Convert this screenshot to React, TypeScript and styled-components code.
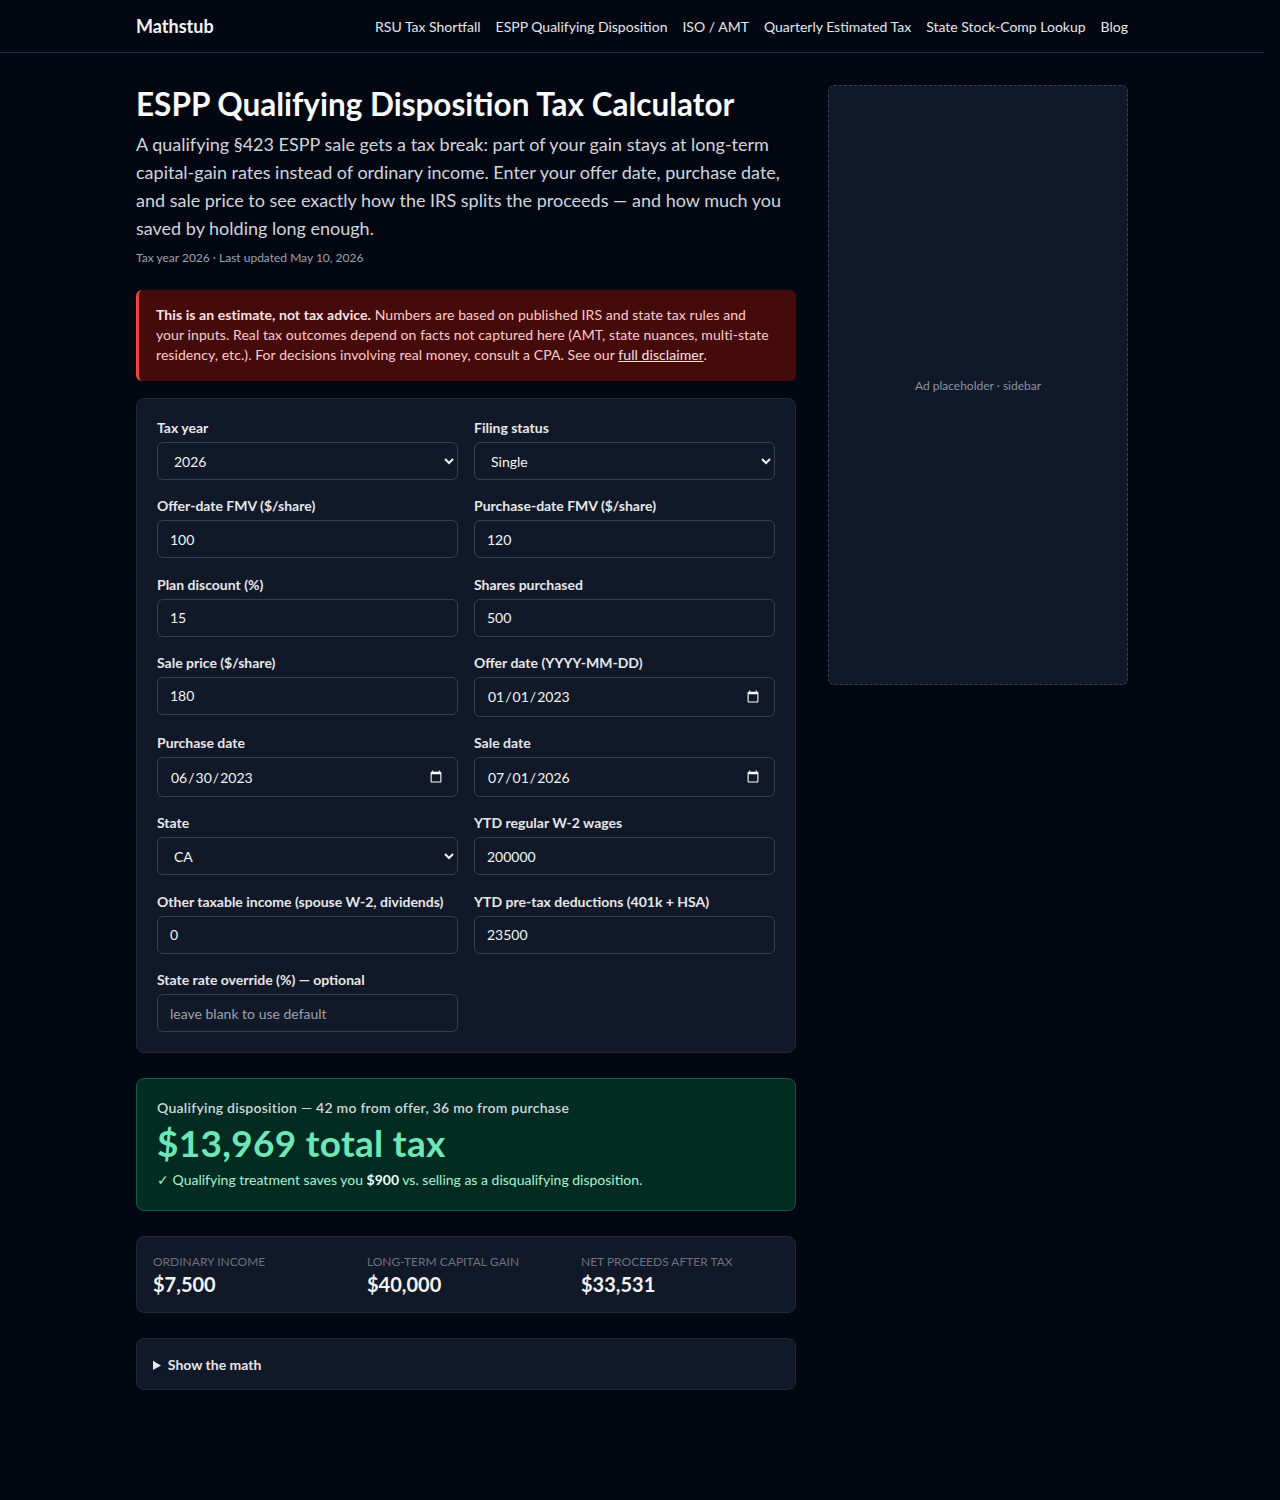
import React from "react";
import styled, { createGlobalStyle } from "styled-components";

const GlobalStyle = createGlobalStyle`
  * { box-sizing: border-box; }
  html, body {
    margin: 0;
    background: #030712;
    color: #e5e7eb;
    font-family: Lato, "Noto Sans", sans-serif;
    color-scheme: dark;
  }
  /* leave room for the classic scrollbar gutter */
  #root { width: calc(100vw - 16px); }
`;

const Header = styled.header`
  border-bottom: 1px solid #1f2937;
`;

const HeaderInner = styled.div`
  max-width: 992px;
  margin: 0 auto;
  height: 52px;
  display: flex;
  align-items: center;
  justify-content: space-between;
`;

const Brand = styled.a`
  font-size: 18px;
  font-weight: 700;
  color: #f3f4f6;
  text-decoration: none;
`;

const Nav = styled.nav`
  display: flex;
  gap: 15px;
  a {
    font-size: 14px;
    color: #e5e7eb;
    text-decoration: none;
  }
`;

const Page = styled.div`
  max-width: 992px;
  margin: 0 auto;
  padding: 32px 0 100px;
  display: grid;
  grid-template-columns: 660px 300px;
  gap: 32px;
  align-items: start;
`;

const Main = styled.main`
  display: flex;
  flex-direction: column;
`;

const Title = styled.h1`
  font-size: 31.5px;
  font-weight: 700;
  color: #f9fafb;
  margin: 0 0 7px;
  line-height: 38px;
`;

const Lede = styled.p`
  font-size: 18px;
  line-height: 28px;
  color: #d1d5db;
  margin: 0 0 8px;
`;

const Meta = styled.div`
  font-size: 12px;
  color: #9ca3af;
  margin-bottom: 25px;
`;

const Disclaimer = styled.div`
  background: #450a0a;
  border-left: 3px solid #ef4444;
  border-radius: 6px;
  padding: 15px 22px 16px 17px;
  font-size: 14px;
  line-height: 20px;
  letter-spacing: 0.08px;
  color: #fecaca;
  margin-bottom: 17px;
  strong { color: #fee2e2; }
  a { color: #fee2e2; text-decoration: underline; }
`;

const Card = styled.section`
  background: #111827;
  border: 1px solid #1f2937;
  border-radius: 8px;
`;

const FormCard = styled(Card)`
  padding: 20px;
  display: grid;
  grid-template-columns: 1fr 1fr;
  column-gap: 16px;
  row-gap: 17.3px;
  margin-bottom: 25px;
`;

const Field = styled.label`
  display: flex;
  flex-direction: column;
  gap: 6px;
  font-size: 14px;
  font-weight: 700;
  color: #e5e7eb;
`;

const controlCss = `
  width: 100%;
  height: 38px;
  background: #111827;
  border: 1px solid #374151;
  border-radius: 6px;
  color: #f3f4f6;
  font-family: Lato, "Noto Sans", sans-serif;
  font-size: 14px;
  padding: 0 12px;
  color-scheme: dark;
  outline: none;
`;

const Input = styled.input<{ $tall?: boolean }>`
  ${controlCss}
  height: ${(p) => (p.$tall ? "40px" : "38px")};
  &::placeholder { color: #9ca3af; }
`;

const Select = styled.select`
  ${controlCss}
  padding: 0 8px 0 12px;
`;

const ResultCard = styled.section`
  background: #022c22;
  border: 1px solid #065f46;
  border-radius: 8px;
  padding: 20px 20px 22px;
  margin-bottom: 25px;
`;

const ResultLead = styled.div`
  font-size: 14px;
  font-weight: 600;
  letter-spacing: 0.25px;
  color: #d1d5db;
`;

const ResultBig = styled.div`
  font-size: 37px;
  font-weight: 700;
  letter-spacing: 0.3px;
  color: #6ee7b7;
  line-height: 44px;
  margin: 5px 0 6px;
`;

const ResultNote = styled.div`
  font-size: 14px;
  color: #a7f3d0;
  strong { color: #ecfdf5; }
`;

const StatsCard = styled(Card)`
  padding: 17px 16px 16px;
  display: grid;
  grid-template-columns: repeat(3, 1fr);
  column-gap: 16px;
  margin-bottom: 25px;
`;

const Stat = styled.div`
  display: flex;
  flex-direction: column;
  gap: 3px;
`;

const StatLabel = styled.span`
  font-size: 12px;
  text-transform: uppercase;
  color: #6b7280;
`;

const StatValue = styled.span`
  font-size: 20px;
  font-weight: 700;
  color: #f3f4f6;
`;

const Details = styled.details`
  background: #111827;
  border: 1px solid #1f2937;
  border-radius: 8px;
  padding: 17px 16px 16px;
  summary {
    font-size: 14px;
    font-weight: 700;
    color: #e5e7eb;
    cursor: pointer;
  }
`;

const AdSlot = styled.aside`
  height: 600px;
  background: #111827;
  border: 1px dashed #374151;
  border-radius: 6px;
  display: flex;
  align-items: center;
  justify-content: center;
  font-size: 12px;
  color: #8b95a5;
`;

type FieldSpec = {
  label: string;
  kind: "select" | "text" | "date";
  value?: string;
  options?: string[];
  placeholder?: string;
};

const fields: FieldSpec[] = [
  { label: "Tax year", kind: "select", value: "2026", options: ["2025", "2026"] },
  { label: "Filing status", kind: "select", value: "Single", options: ["Single", "Married filing jointly", "Head of household"] },
  { label: "Offer-date FMV ($/share)", kind: "text", value: "100" },
  { label: "Purchase-date FMV ($/share)", kind: "text", value: "120" },
  { label: "Plan discount (%)", kind: "text", value: "15" },
  { label: "Shares purchased", kind: "text", value: "500" },
  { label: "Sale price ($/share)", kind: "text", value: "180" },
  { label: "Offer date (YYYY-MM-DD)", kind: "date", value: "2023-01-01" },
  { label: "Purchase date", kind: "date", value: "2023-06-30" },
  { label: "Sale date", kind: "date", value: "2026-07-01" },
  { label: "State", kind: "select", value: "CA", options: ["CA", "NY", "TX", "WA"] },
  { label: "YTD regular W-2 wages", kind: "text", value: "200000" },
  { label: "Other taxable income (spouse W-2, dividends)", kind: "text", value: "0" },
  { label: "YTD pre-tax deductions (401k + HSA)", kind: "text", value: "23500" },
  { label: "State rate override (%) — optional", kind: "text", placeholder: "leave blank to use default" },
];

const navLinks = [
  "RSU Tax Shortfall",
  "ESPP Qualifying Disposition",
  "ISO / AMT",
  "Quarterly Estimated Tax",
  "State Stock-Comp Lookup",
  "Blog",
];

const stats = [
  { label: "Ordinary income", value: "$7,500" },
  { label: "Long-term capital gain", value: "$40,000" },
  { label: "Net proceeds after tax", value: "$33,531" },
];

const renderControl = (f: FieldSpec) => {
  if (f.kind === "select") {
    return (
      <Select defaultValue={f.value}>
        {f.options!.map((o) => (
          <option key={o}>{o}</option>
        ))}
      </Select>
    );
  }
  if (f.kind === "date") {
    return <Input type="date" $tall defaultValue={f.value} />;
  }
  return <Input type="text" defaultValue={f.value} placeholder={f.placeholder} />;
};

const App = () => {
  return (
    <>
      <GlobalStyle />
      <Header>
        <HeaderInner>
          <Brand href="#">Mathstub</Brand>
          <Nav>
            {navLinks.map((l) => (
              <a key={l} href="#">
                {l}
              </a>
            ))}
          </Nav>
        </HeaderInner>
      </Header>
      <Page>
        <Main>
          <Title>ESPP Qualifying Disposition Tax Calculator</Title>
          <Lede>
            A qualifying §423 ESPP sale gets a tax break: part of your gain stays at long-term
            capital-gain rates instead of ordinary income. Enter your offer date, purchase date,
            and sale price to see exactly how the IRS splits the proceeds — and how much you
            saved by holding long enough.
          </Lede>
          <Meta>Tax year 2026 · Last updated May 10, 2026</Meta>

          <Disclaimer>
            <strong>This is an estimate, not tax advice.</strong> Numbers are based on published IRS
            and state tax rules and your inputs. Real tax outcomes depend on facts not captured here
            (AMT, state nuances, multi-state residency, etc.). For decisions involving real money,
            consult a CPA. See our <a href="#">full disclaimer</a>.
          </Disclaimer>

          <FormCard as="form">
            {fields.map((f) => (
              <Field key={f.label}>
                {f.label}
                {renderControl(f)}
              </Field>
            ))}
          </FormCard>

          <ResultCard>
            <ResultLead>Qualifying disposition — 42 mo from offer, 36 mo from purchase</ResultLead>
            <ResultBig>$13,969 total tax</ResultBig>
            <ResultNote>
              ✓ Qualifying treatment saves you <strong>$900</strong> vs. selling as a disqualifying
              disposition.
            </ResultNote>
          </ResultCard>

          <StatsCard>
            {stats.map((s) => (
              <Stat key={s.label}>
                <StatLabel>{s.label}</StatLabel>
                <StatValue>{s.value}</StatValue>
              </Stat>
            ))}
          </StatsCard>

          <Details>
            <summary>Show the math</summary>
          </Details>
        </Main>
        <AdSlot>Ad placeholder · sidebar</AdSlot>
      </Page>
    </>
  );
};

export default App;
